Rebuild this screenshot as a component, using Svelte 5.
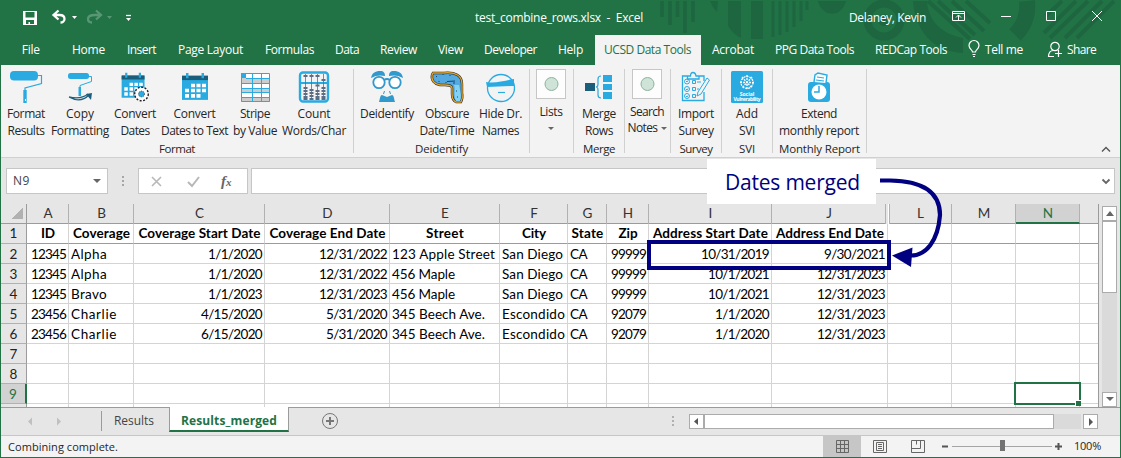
<script>
  function fit(node, w) {
    const range = document.createRange();
    range.selectNodeContents(node);
    const natural = range.getBoundingClientRect().width;
    const n = node.textContent.length;
    node.style.width = w + 'px';
    node.style.letterSpacing = (w - natural) / n + 'px';
  }

  const tabs = [
    ['Home', 33], ['Insert', 29], ['Page Layout', 65], ['Formulas', 49], ['Data', 24],
    ['Review', 37], ['View', 25], ['Developer', 53], ['Help', 25], ['UCSD Data Tools', 87],
    ['Acrobat', 42], ['PPG Data Tools', 79], ['REDCap Tools', 72]
  ];

  const groups = [
    { w: 353, label: ['Format', 36], items: [
      { w: 50, icon: 'roller', l: [['Format', 38], ['Results', 37]] },
      { w: 58, icon: 'copyroller', l: [['Copy', 28], ['Formatting', 58]] },
      { w: 52, icon: 'calgear', l: [['Convert', 42], ['Dates', 29]] },
      { w: 67, icon: 'cal', l: [['Convert', 42], ['Dates to Text', 67]] },
      { w: 54, icon: 'stripe', l: [['Stripe', 30], ['by Value', 44]] },
      { w: 64, icon: 'abacus', l: [['Count', 33], ['Words/Char', 64]] }] },
    { w: 176, label: ['Deidentify', 53], items: [
      { w: 66, icon: 'disguise', l: [['Deidentify', 54]] },
      { w: 54, icon: 'clock', l: [['Obscure', 44], ['Date/Time', 55]] },
      { w: 53, icon: 'ninja', l: [['Hide Dr.', 43], ['Names', 37]] }] },
    { w: 44, items: [{ w: 42, icon: 'dot', menu: true, l: [['Lists', 23]] }] },
    { w: 51, label: ['Merge', 32], items: [{ w: 50, icon: 'merge', l: [['Merge', 34], ['Rows', 28]] }] },
    { w: 46, items: [{ w: 44, icon: 'dot', menu: true, l: [['Search', 34], ['Notes', 30]] }] },
    { w: 51, label: ['Survey', 33], items: [{ w: 50, icon: 'survey', l: [['Import', 36], ['Survey', 35]] }] },
    { w: 51, label: ['SVI', 16], items: [{ w: 50, icon: 'svi', l: [['Add', 22], ['SVI', 16]] }] },
    { w: 94, label: ['Monthly Report', 81], items: [{ w: 92, icon: 'scale', l: [['Extend', 36], ['monthly report', 80]] }] }
  ];

  const cols = ['A', 'B', 'C', 'D', 'E', 'F', 'G', 'H', 'I', 'J', 'L', 'M', 'N', ''];
  const heads = [['ID', 14], ['Coverage', 57], ['Coverage Start Date', 122], ['Coverage End Date', 116],
    ['Street', 38], ['City', 24], ['State', 32], ['Zip', 19], ['Address Start Date', 115], ['Address End Date', 108]];
  const widths = { Alpha: 36, Bravo: 36, Charlie: 46, '123 Apple Street': 103, '456 Maple': 63,
    '345 Beech Ave.': 93, 'San Diego': 61, Escondido: 63, CA: 17 };
  const width = (t) => widths[t] ?? [...t].reduce((a, c) => a + (c === '/' ? 6 : 7), 0);
  const rows = [
    ['12345', 'Alpha', '1/1/2020', '12/31/2022', '123 Apple Street', 'San Diego', 'CA', '99999', '10/31/2019', '9/30/2021'],
    ['12345', 'Alpha', '1/1/2020', '12/31/2022', '456 Maple', 'San Diego', 'CA', '99999', '10/1/2021', '12/31/2023'],
    ['12345', 'Bravo', '1/1/2023', '12/31/2023', '456 Maple', 'San Diego', 'CA', '99999', '10/1/2021', '12/31/2023'],
    ['23456', 'Charlie', '4/15/2020', '5/31/2020', '345 Beech Ave.', 'Escondido', 'CA', '92079', '1/1/2020', '12/31/2023'],
    ['23456', 'Charlie', '6/15/2020', '5/31/2020', '345 Beech Ave.', 'Escondido', 'CA', '92079', '1/1/2020', '12/31/2023'],
    [], [], []
  ];
  const leftCols = [1, 4, 5, 6];
</script>

{#snippet calendar()}
  <path d="M3 5h26v26H3z" fill="#29abe2" />
  <path d="M3 4h26v5H3z" fill="#1b5e7b" />
  <path d="M7 1h2.500v6H7zM22.500 1H25v6h-2.500z" fill="#29abe2" />
  <path d="M12 13h4v4h-4zM17.500 13h4v4h-4zM23 13h4v4h-4zM6 18.500h4v4H6zM12 18.500h4v4h-4zM17.500 18.500h4v4h-4zM23 18.500h4v4h-4zM6 24.500h4v4H6zM12 24.500h4v4h-4zM17.500 24.500h4v4h-4z" fill="#fff" />
{/snippet}

{#snippet icon(name)}
  {#if name === 'dot'}
    <div class="dotbox"><svg width="28" height="28"><circle cx="14.500" cy="14" r="6.500" fill="#cfe3d8" stroke="#8cb39c" /></svg></div>
  {:else}
    <svg class="ico" width="32" height="32" viewBox="0 0 32 32">
      {#if name === 'roller'}
        <rect x="0" y="0" width="28" height="9.500" rx="4" fill="#29abe2" />
        <path d="M28 4.500h3.500v8L15 17v3" fill="none" stroke="#29abe2" stroke-width="1.200" />
        <path d="M13.300 19h3.400v13h-3.400z" fill="#29abe2" /><path d="M15 28h1v2h-1z" fill="#fff" />
      {:else if name === 'copyroller'}
        <rect x="4" y="2" width="21" height="6" rx="2.500" fill="#29abe2" />
        <path d="M25 5.500h2.500v5L16 14.500v2" fill="none" stroke="#29abe2" />
        <path d="M14.500 16h2.500v9h-2.500z" fill="#29abe2" />
        <path d="M5 26c8 4.500 15 3 20-2M5 26c8 2 14 1 19-3" fill="none" stroke="#1b5e7b" stroke-width="1.300" />
        <path d="M22 23l6-1-1 7z" fill="#1b5e7b" />
      {:else if name === 'cal'}
        <g transform="translate(0 1) scale(1 .9)">{@render calendar()}</g>
      {:else if name === 'calgear'}
        <g transform="translate(0 1) scale(.88 .83)">{@render calendar()}</g>
        <circle cx="22.500" cy="23" r="6.800" fill="#fff" stroke="#222" stroke-width="1.400" stroke-dasharray="2 1.500" />
        <circle cx="22.500" cy="23" r="3" fill="#29abe2" stroke="#222" stroke-width=".7" stroke-dasharray="1 1.200" />
      {:else if name === 'stripe'}
        <path d="M2 2h29v29H2z" fill="#fff" />
        <path d="M2 7h29v5H2zM2 17h29v5H2zM2 26h29v5H2z" fill="#ccc" />
        <path d="M2.500 2.500h28v28h-28zM13.500 2v29M22.500 2v29M7 7.500h24M2 12.500h29M2 17.500h29M2 21.500h29M2 26.500h29" fill="none" stroke="#29abe2" />
        <path d="M2 2h5v5H2z" fill="#29abe2" />
      {:else if name === 'abacus'}
        <rect x="2" y="1.500" width="28" height="29" rx="3" fill="#f3f3f3" stroke="#29abe2" stroke-width="2.400" />
        <path d="M2 12h28" stroke="#29abe2" stroke-width="2" />
        <path d="M7.500 3v26M13.500 3v26M19.500 3v26M25.500 3v26" stroke="#5c6c84" stroke-width=".8" />
        <path d="M5.500 5h4M11.500 5h4M17.500 5h4M23.500 9h4M17.500 14.500h4M5.500 17h4M5.500 20h4M5.500 23h4M5.500 26h4M11.500 19h4M11.500 22h4M11.500 25h4M11.500 28h4M17.500 20h4M17.500 23h4M17.500 26h4M23.500 17h4M23.500 20h4M23.500 23h4M23.500 26h4M5.500 28h4M17.500 28h4M23.500 28h4" stroke="#5c6c84" stroke-width="1.900" />
      {:else if name === 'disguise'}
        <path d="M0 7C1 2 4 0 9 0c4 0 5 2 5 5-4-1-9-1-14 2zM32 7c-1-5-4-7-9-7-4 0-5 2-5 5 4-1 9-1 14 2z" fill="#3199cb" />
        <circle cx="8" cy="11.500" r="5.700" fill="#fff" stroke="#3199cb" stroke-width="1.800" />
        <circle cx="24" cy="11.500" r="5.700" fill="#fff" stroke="#3199cb" stroke-width="1.800" />
        <path d="M13 9q3-2 6 0" fill="none" stroke="#3199cb" stroke-width="1.800" />
        <path d="M13.500 20l-1 3M18.500 20l1 3" stroke="#3199cb" />
        <path d="M8 31c1-3 1-7 3-7l5 2 5-2c2 0 2 4 3 7z" fill="#3199cb" />
      {:else if name === 'clock'}
        <path d="M2 2h11C24 1 31 4 31 13v9q1 5-1 9h-5q-4-2-4-8v-6q0-3-7-3H9C3 13 0 9 1 4z" fill="#54a9df" stroke="#222" stroke-width="2.400" />
        <path d="M2 2h11C24 1 31 4 31 13v9q1 5-1 9h-5q-4-2-4-8v-6q0-3-7-3H9C3 13 0 9 1 4z" fill="none" stroke="#e5a52b" stroke-width="1.400" />
        <path d="M23 14c2 4-1 9 2 16h4c2-5 0-11-1-16z" fill="#82d2f3" />
        <path d="M5 5l1 1M12 3v1M19 4v1M24 10l-8 .5M8 10v1M15 11v1M23 11v2M25 20h1M26 26h1" stroke="#124568" />
      {:else if name === 'ninja'}
        <circle cx="16" cy="17" r="13.500" fill="none" stroke="#29abe2" stroke-width="1.300" />
        <path d="M1 11c9 2 20-2 28-3v7c-9 0-18 1-27 1z" fill="#29abe2" />
        <path d="M13 21.500h7" stroke="#29abe2" stroke-width="1.200" />
      {:else if name === 'merge'}
        <path d="M2 12h10v8H2z" fill="#1b5e7b" />
        <path d="M20 4h9v7h-9zM20 13h9v6h-9zM20 21h9v7h-9z" fill="#29abe2" />
        <path d="M18 5q-3 0-3 3v5q0 3-2 3 2 0 2 3v5q0 3 3 3" fill="none" stroke="#29abe2" stroke-width="1.200" />
      {:else if name === 'survey'}
        <path d="M24 21v8.500H2.500V5H7M19 5h5v5M7.500 5h3q0-3.500 2.500-3.500T16 5h3v3H7.500z" fill="none" stroke="#29abe2" stroke-width="1.300" />
        <g fill="none" stroke="#29abe2"><circle cx="7" cy="10.500" r="2.500" /><circle cx="7" cy="18" r="2.500" /><circle cx="7" cy="25" r="2.500" />
          <path d="M6 10l1 1 1-1.500M6 18l1 1 1-1.500M6 25l1 1 1-1.500M12.500 9.500h3v3h-3zM12.500 16.500h3v3h-3zM12.500 23.500h3v3h-3zM17 11h4M17 18h2M27 7l2.500 2-8.500 14-4 2 1-4z" /></g>
      {:else if name === 'svi'}
        <rect width="32" height="32" rx="1.500" fill="#29abe2" />
        <g stroke="#fff" stroke-width="1.300" stroke-dasharray="2 1" fill="none"><path d="M16 4v15M9 11.500h15M11 6l10 11M21 6L11 17" /><circle cx="16" cy="11.500" r="6" /></g>
        <text x="16" y="25" class="tiny">Social</text><text x="16" y="30" class="tiny" textLength="27">Vulnerability</text>
      {:else if name === 'scale'}
        <rect x="5" y="11" width="22" height="20" rx="3" fill="#29abe2" />
        <path d="M11 11l1-7 3-2 9 2-1 8" fill="#fff" stroke="#29abe2" stroke-width="1.400" />
        <path d="M14 6l7 1M13 9l8 1" stroke="#29abe2" stroke-width="1.200" />
        <circle cx="16" cy="21" r="7.500" fill="#fff" /><path d="M16 15v6h-5" fill="none" stroke="#29abe2" stroke-width="1.500" />
      {/if}
    </svg>
  {/if}
{/snippet}

<div class="app">
  <header>
    <svg class="art" width="540" height="54" viewBox="0 0 540 54" fill="none" stroke="#1d6640">
      <path d="M82 1v16M90 1v24M97.500 1v16M105 1v32M113 1v21" stroke-width="3.600" />
      <path d="M130 1h8l-1 11q-5-5-7-11zM148 1h13v37q-7-3-13-12zM171 1h12v38h-12z" fill="#1d6640" stroke="none" />
      <path d="M193 1v36M200 1v34M207 1v31M214 1v26M221 1v20M227 1v9" stroke-width="3" />
      <path d="M238 1h28c-4 17-24 17-28 0z" fill="#1d6640" stroke="none" />
      <circle cx="304" cy="20" r="16.500" stroke-width="8" /><circle cx="304" cy="20" r="6" fill="#1d6640" stroke="none" />
      <path d="M333 1c2 27 17 50 50 52V38C361 34 348 20 347 1z" fill="#1d6640" stroke="none" />
      <path d="M348 1l42 38M358 1l37 34M372 1l32 30M386 1l24 22" stroke-width="4" />
      <path d="M447 1q2 20-12 34" stroke-width="16" />
      <path d="M482 1l-16 15M496 1l-32 32M508 1l-38 37M522 1l-37 37M534 1l-37 37" stroke-width="4" />
    </svg>
    <div class="title">
      <svg class="quick" width="140" height="35" fill="none">
        <path d="M23 11h14v14H23z" fill="#fff" /><path d="M25.500 12h9v5.500h-9zM26 20h8v4h-4v-2h-1.500v2H26z" fill="#217346" />
        <path d="M59 11.500L54 16l5 4.500M54 16h6c4 0 5 2 5 4s-2 3.500-4 3.500" stroke="#fff" stroke-width="2.300" transform="translate(-.5 -1)" />
        <path d="M72 16h5l-2.500 3z" fill="#fff" />
        <g opacity=".25"><path d="M96 10.500l5 4.500-5 4.500M101 15h-6c-5 0-7 2-7 4s1 3.500 4 3.500" stroke="#fff" stroke-width="2.300" /><path d="M107 16h5l-2.500 3z" fill="#fff" /></g>
        <path d="M126 15.500h5" stroke="#fff" stroke-width="1.300" /><path d="M126 18h5l-2.500 3z" fill="#fff" />
      </svg>
      <div class="name"><span use:fit={168}>test_combine_rows.xlsx&nbsp; -&nbsp; Excel</span></div>
      <span class="user" use:fit={77}>Delaney, Kevin</span>
      <svg class="win" width="160" height="35" fill="none" stroke="#fff">
        <path d="M11.500 11.500h12v9h-12zM11.500 13.500h12M17.500 20v-5M15 17.500l2.500-2.500 2.500 2.500M60 16.500h10M105.500 11.500h9v9h-9z" />
        <path d="M151.500 11.500l10 10M161.500 11.500l-10 10" transform="translate(-.5 -.5)" />
      </svg>
    </div>
    <nav>
      <span class="file"><span use:fit={18}>File</span></span>
      {#each tabs as [t, w], i}<span class="tab" class:active={t.startsWith('UCSD')} class:wide={i < 3}><span use:fit={w}>{t}</span></span>{/each}
      <svg class="bulb" width="14" height="18" fill="none" stroke="#fff" stroke-width="1.200"><path d="M4.500 12c0-2-3.500-3-3.500-6.500a5 5 0 0 1 10 0C11 9 7.500 10 7.500 12zM4.500 14.500h3M5 16.500h2" /></svg>
      <span use:fit={38}>Tell me</span>
      <svg class="person" width="17" height="18" fill="none" stroke="#fff" stroke-width="1.200"><circle cx="8" cy="5.500" r="4.200" /><path d="M1.500 16c0-4 2-6.500 5-6.500M11.500 9v7M8 12.500h7M2 15.500h5" /></svg>
      <span use:fit={29}>Share</span>
    </nav>
  </header>

  <section class="ribbon">
    {#each groups as g}
      <div class="group" style="width:{g.w}px">
        <div class="items">
          {#each g.items as it}
            <div class="item" class:menu={it.menu} style="width:{it.w}px">
              {@render icon(it.icon)}
              {#each it.l as [t, w], i}
                <div class="line"><span use:fit={w}>{t}</span>{#if it.menu && i === 1}<i class="down side"></i>{/if}</div>
              {/each}
              {#if it.menu && it.l.length === 1}<i class="down below"></i>{/if}
            </div>
          {/each}
        </div>
        {#if g.label}<div class="glabel"><span use:fit={g.label[1]}>{g.label[0]}</span></div>{/if}
      </div>
    {/each}
    <svg class="collapse" width="10" height="7" fill="none" stroke="#555" stroke-width="1.400"><path d="M1 5.500l4-4 4 4" /></svg>
  </section>

  <section class="formula">
    <div class="box namebox"><span use:fit={17}>N9</span><i class="down big"></i></div>
    <svg class="dots" width="3" height="11" fill="#a6a6a6"><path d="M0 0h2v2H0zM0 4h2v2H0zM0 8h2v2H0z" /></svg>
    <div class="box fx">
      <svg width="60" height="24" fill="none" stroke="#b8b8b8" stroke-width="2"><path d="M13 8l9 9M22 8l-9 9" stroke-width="1.600" /><path d="M49 13l4 4 7-9" /></svg>
      <em>f<small>x</small></em>
    </div>
    <div class="box bar"><svg width="10" height="7" fill="none" stroke="#666" stroke-width="1.800"><path d="M1.500 1.500L5 5l3.500-3.500" /></svg></div>
  </section>

  <section class="sheet">
    <div class="grid">
      <div class="corner"></div>
      {#each cols as c}<div class="ch" class:jcol={c === 'J'} class:lcol={c === 'L'} class:sel={c === 'N'} class:end={!c}>{c}</div>{/each}
      <div class="rh one">1</div>
      {#each cols as c, i}<div class="cell head">{#if heads[i]}<b use:fit={heads[i][1]}>{heads[i][0]}</b>{/if}</div>{/each}
      {#each rows as r, n}
        <div class="rh" class:sel={n === 7}>{n + 2}</div>
        {#each cols as c, i}
          <div class="cell" class:left={leftCols.includes(i)} class:current={n === 7 && c === 'N'}>{#if r[i]}<span use:fit={width(r[i])}>{r[i]}</span>{/if}</div>
        {/each}
      {/each}
      <div class="rh stub"></div>
      {#each cols as c}<div class="cell stub"></div>{/each}
    </div>
    <div class="vscroll">
      <div class="btn"><svg width="8" height="5" fill="#666"><path d="M0 5h8L4 0z" /></svg></div>
      <div class="vthumb"></div>
      <div class="btn low"><svg width="8" height="5" fill="#666"><path d="M0 0h8L4 4z" /></svg></div>
    </div>
  </section>

  <section class="sheets">
    <svg class="navs" width="100" height="28" fill="#c0c0c0"><path d="M31 9.500v8l-4-4zM56 9.500v8l4-4z" /></svg>
    <div class="rtab"><span use:fit={40}>Results</span></div>
    <div class="mtab"><b use:fit={96}>Results_merged</b></div>
    <svg class="plus" width="18" height="18" fill="none" stroke="#777"><circle cx="9" cy="9" r="7.500" /><path d="M5 9h8M9 5v8" stroke-width="2" /></svg>
    <svg class="hdots" width="3" height="11" fill="#b0b0b0"><path d="M0 0h2v2H0zM0 4h2v2H0zM0 8h2v2H0z" /></svg>
    <div class="hscroll">
      <div class="btn"><svg width="5" height="8" fill="#555"><path d="M4 0v7L0 3.500z" /></svg></div>
      <div class="hthumb"></div><div class="htrack"></div>
      <div class="btn"><svg width="5" height="8" fill="#555"><path d="M1 0v8l4-4z" /></svg></div>
    </div>
  </section>

  <footer>
    <span class="msg" use:fit={110}>Combining complete.</span>
    <div class="view on"><svg width="13" height="13" fill="none" stroke="#666"><path d="M.5.500h12v12H.5zM4.500 0v13M8.500 0v13M0 4.500h13M0 8.500h13" /></svg></div>
    <div class="view"><svg width="14" height="13" fill="none" stroke="#666"><path d="M.5.500h13v12H.5zM3.500 2.500h7v8h-7zM5 4.500h4M5 6.500h4M5 8.500h4" /></svg></div>
    <div class="view"><svg width="14" height="13" fill="none" stroke="#666"><path d="M.5.500h13v12H.5zM5.500 0v4.500M1 8.500h8.500V0" /></svg></div>
    <svg class="zoom" width="124" height="21" fill="none" stroke="#555"><path d="M2 10.500h6M115 10.500h7M118.500 7v7" stroke-width="2" /><path d="M12 10.500h100" stroke="#a5a5a5" /><path d="M60 4h5v11h-5z" fill="#737373" stroke="none" /></svg>
    <span class="pct" use:fit={27}>100%</span>
  </footer>

  <div class="callout"><span use:fit={135}>Dates merged</span></div>
  <div class="mark"></div>
  <svg class="arrow" width="62" height="95"><path d="M0 5.500h10C46 6 60 19 60 40 58 66 46 81 30 80.500" fill="none" stroke="#000080" stroke-width="4.200" /><path d="M12 80.500L32.500 72.500 31 92z" fill="#000080" /></svg>
</div>

<style>
  .app { position: relative; box-sizing: border-box; width: 1121px; height: 458px; display: flex; flex-direction: column; overflow: hidden; background: #e6e6e6; border: 1px solid #217346; border-top: 0; font: 12px/16px "Open Sans", "Noto Sans", sans-serif; color: #262626; }
  span, b { white-space: pre; }
  svg { display: block; flex: none; overflow: visible; }
  header { position: relative; height: 65px; flex: none; background: #217346; color: #fff; }
  .art { position: absolute; left: 579px; top: 0; overflow: hidden; }
  .title { position: relative; height: 35px; display: flex; align-items: center; }
  .quick { margin-left: -1px; }
  .name { flex: none; margin-left: 335px; width: 374px; padding-top: 1px; }
  .user { flex: none; }
  .win { margin-left: 15px; }
  nav { position: relative; height: 30px; display: flex; align-items: center; }
  nav span { flex: none; }
  .file { width: 59.500px; padding-right: 1px; display: flex; justify-content: center; }
  .tab { height: 30px; padding: 0 10.500px; display: flex; align-items: center; }
  .tab.wide { margin-right: 1px; }
  .tab.active { background: #f3f3f3; color: #217346; padding: 0 9.500px; margin: 0 1px; }
  .bulb { margin: -2px 3px 0 10.500px; }
  .person { margin: 0 3px 0 24px; }

  .ribbon { position: relative; height: 93px; flex: none; box-sizing: border-box; background: #f3f3f3; border-bottom: 1px solid #d0d0d0; display: flex; }
  .group { flex: none; position: relative; box-sizing: border-box; height: 84px; margin-top: 4px; border-right: 1px solid #d0d0d0; display: flex; flex-direction: column; }
  .items { display: flex; height: 72px; flex: none; }
  .item { flex: none; display: flex; flex-direction: column; align-items: center; }
  .ico { margin: 2px 0 3px; }
  .line { height: 16px; display: flex; align-items: center; white-space: nowrap; }
  .item:not(.menu) .line + .line { margin-top: .5px; }
  .dotbox { box-sizing: border-box; width: 30px; height: 30px; border: 1px solid #c6c6c6; background: #fdfdfd; margin-bottom: 5px; }
  .tiny { font: bold 5px "Open Sans", sans-serif; fill: #fff; text-anchor: middle; }
  .down { width: 0; height: 0; flex: none; border: 3px solid transparent; border-top: 3px solid #666; border-bottom: 0; }
  .down.side { margin-left: 3px; }
  .down.below { margin-top: 7px; }
  .down.big { border-width: 4px 4px 0; }
  .glabel { height: 16px; line-height: 16px; font-size: 11.500px; display: flex; justify-content: center; }
  .collapse { position: absolute; right: 9px; bottom: 4px; }

  .formula { height: 46px; flex: none; display: flex; padding: 10px 5px 10px; box-sizing: border-box; }
  .box { box-sizing: border-box; height: 26px; border: 1px solid #c6c6c6; background: #fff; display: flex; align-items: center; flex: none; }
  .namebox { width: 102px; padding: 0 6px; justify-content: space-between; color: #444; }
  .dots { margin: 8px 13px 0 14px; }
  .fx { width: 110px; }
  .fx em { margin-left: 22px; font: italic bold 15px "Liberation Serif", serif; color: #666; }
  .fx small { font-size: 11px; }
  .bar { width: 864px; margin-left: 3px; justify-content: flex-end; padding-right: 3px; }

  .sheet { height: 203px; flex: none; display: flex; }
  .grid { width: 1098px; flex: none; box-sizing: border-box; border-right: 1px solid #9b9b9b; background: #fff; display: grid; grid-template-columns: 26px 42px 65px 131px 125px 110px 68px 39px 42px 123px 116px 64px 64px 64px 18px; grid-template-rows: repeat(10, 20px) 3px; font: 13.500px/20px Lato, sans-serif; color: #000; }
  .corner { background: linear-gradient(135deg, transparent 50%, #b1b1b1 50%) 11px 4px / 11px 11px no-repeat, #e6e6e6; border-right: 1px solid #9b9b9b; border-bottom: 1px solid #9b9b9b; }
  .ch { background: linear-gradient(#9b9b9b, #9b9b9b) bottom / 100% 1px no-repeat, #e6e6e6; border-right: 1px solid #b1b1b1; text-align: center; padding-left: 1px; height: 20px; line-height: 18px; color: #333; }
  .jcol { margin-right: 2px; box-shadow: 2px 0 #e6e6e6; }
  .lcol { margin-left: 1px; border-left: 1px solid #b1b1b1; padding: 0; }
  .ch.end { border: 0; }
  .ch.sel { background: #d2d2d2; height: 18px; border-bottom: 2px solid #217346; color: #217346; }
  .rh { box-sizing: border-box; height: 20px; background: #e6e6e6; border-right: 1px solid #9b9b9b; border-bottom: 1px solid #b1b1b1; text-align: center; color: #222; }
  .rh.sel { background: #d2d2d2; color: #217346; border-right: 2px solid #217346; }
  .rh.one, .cell.head { line-height: 19px; }
  .cell { box-sizing: border-box; border-right: 1px solid #d4d4d4; border-bottom: 1px solid #d4d4d4; padding: 0 2px 0 2px; display: flex; justify-content: flex-end; line-height: 21px; height: 20px; }
  .cell.left { justify-content: flex-start; }
  .cell.head { justify-content: center; border-bottom-color: #9b9b9b; padding-right: 1px; }
  .cell.stub, .rh.stub { border-bottom: 0; height: 3px; }
  .cell:nth-child(15n) { border-right: 0; }
  .current { position: relative; }
  .current::before { content: ""; position: absolute; left: -2px; top: -2px; width: 63px; height: 19px; border: 2px solid #217346; }
  .current::after { content: ""; position: absolute; right: -2px; bottom: -3px; width: 5px; height: 5px; background: #217346; border: 1px solid #fff; border-right: 0; border-bottom: 0; }
  .btn { box-sizing: border-box; width: 15px; height: 15px; background: #fff; border: 1px solid #ababab; display: flex; align-items: center; justify-content: center; flex: none; }
  .vscroll { width: 15px; margin: 2px 0 0 3px; height: 201px; display: flex; flex-direction: column; background: #dadada; }
  .vthumb { box-sizing: border-box; height: 72px; border: 1px solid #ababab; background: #fff; }
  .low { margin-top: auto; }

  .sheets { height: 28px; flex: none; box-sizing: border-box; border-top: 1px solid #9b9b9b; display: flex; }
  .rtab { margin-top: 3px; height: 20px; width: 67px; border-left: 1px solid #9b9b9b; display: flex; align-items: center; justify-content: center; box-sizing: border-box; color: #444; padding-right: 2px; }
  .mtab { margin: -1px 0 0 1px; box-sizing: border-box; width: 120px; height: 25px; background: #fff; border: 1px solid #9b9b9b; border-top: 0; border-bottom: 2px solid #217346; color: #217346; display: flex; align-items: center; justify-content: center; padding-top: 4px; }
  .plus { margin: 4px 0 0 32px; }
  .hdots { margin: 8px 14px 0 333px; }
  .hscroll { display: flex; margin-top: 6px; height: 15px; }
  .hthumb { box-sizing: border-box; width: 350px; border: 1px solid #ababab; background: #fff; }
  .htrack { width: 27px; background: #dadada; margin-right: 2px; }

  footer { height: 22px; flex: none; box-sizing: border-box; border-top: 1px solid #c6c6c6; background: #f3f3f3; display: flex; align-items: center; font-size: 11px; }
  .msg { margin: 0 705px 0 7px; flex: none; }
  .pct { margin-top: -2px; }
  .view { width: 38px; height: 21px; display: flex; align-items: center; justify-content: center; flex: none; }
  .view.on { background: #c6c6c6; }
  .zoom { margin: 0 10px 0 3px; }

  .callout { position: absolute; left: 706px; top: 159px; width: 169px; height: 45px; box-sizing: border-box; padding-left: 2px; background: #fff; color: #000080; font-size: 21px; line-height: 46px; display: flex; justify-content: center; }
  .mark { position: absolute; left: 646px; top: 240px; width: 236px; height: 22px; border: 4px solid #000080; }
  .arrow { position: absolute; left: 879px; top: 175px; }
</style>
